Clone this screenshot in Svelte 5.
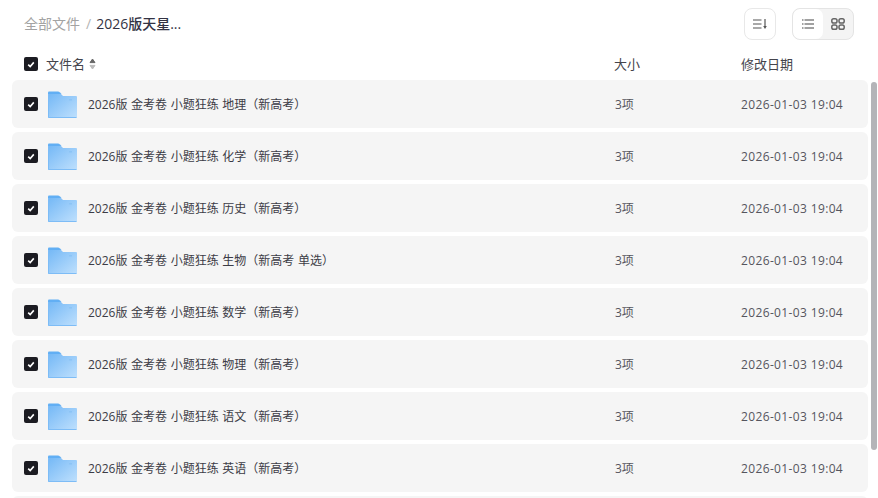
<script>
  const subjects = [
    "地理（新高考）",
    "化学（新高考）",
    "历史（新高考）",
    "生物（新高考 单选）",
    "数学（新高考）",
    "物理（新高考）",
    "语文（新高考）",
    "英语（新高考）",
  ];
</script>

{#snippet check()}
  <span class="check">
    <svg width="8" height="7" viewBox="0 0 8 7"><path d="M1.2 3.6 L3.2 5.5 L6.8 1.4" fill="none" stroke="#fff" stroke-width="1.6" /></svg>
  </span>
{/snippet}

<div class="page">
  <div class="toolbar">
    <div class="crumbs">
      <span class="root">全部文件</span>
      <span class="sep">/</span>
      <span class="current">2026版天星...</span>
    </div>
    <div class="actions">
      <button class="tool" aria-label="排序">
        <svg width="16" height="12" viewBox="0 0 16 12">
          <path d="M1 2h8.5M1 6h8.5M1 10h8.5" stroke="#555" stroke-width="1.2" fill="none" />
          <path d="M13 1v8" stroke="#555" stroke-width="1.2" />
          <path d="M11.2 8h3.6L13 11z" fill="#555" />
        </svg>
      </button>
      <div class="switch">
        <button class="seg active" aria-label="列表">
          <svg width="14" height="12" viewBox="0 0 14 12">
            <path d="M3.5 2h9.5M3.5 6h9.5M3.5 10h9.5" stroke="#444" stroke-width="1.2" fill="none" />
            <path d="M1 2h1.5M1 6h1.5M1 10h1.5" stroke="#444" stroke-width="1.2" fill="none" />
          </svg>
        </button>
        <button class="seg" aria-label="网格">
          <svg width="14" height="12" viewBox="0 0 14 12">
            <rect x="0.8" y="0.8" width="5.2" height="4.2" rx="1.8" fill="none" stroke="#666" stroke-width="1.5" />
            <rect x="8" y="0.8" width="5.2" height="4.2" rx="1.8" fill="none" stroke="#666" stroke-width="1.5" />
            <rect x="0.8" y="7" width="5.2" height="4.2" rx="1.8" fill="none" stroke="#666" stroke-width="1.5" />
            <rect x="8" y="7" width="5.2" height="4.2" rx="1.8" fill="none" stroke="#666" stroke-width="1.5" />
          </svg>
        </button>
      </div>
    </div>
  </div>

  <div class="head">
    <div class="head-name">
      {@render check()}
      <span>文件名</span>
      <svg class="sort" width="7" height="12" viewBox="0 0 7 12">
        <path d="M3.5 1 L6 4.6 H1z" fill="#666" stroke="#666" stroke-width="1" stroke-linejoin="round" />
        <path d="M3.5 11 L6 7.4 H1z" fill="#bbb" stroke="#bbb" stroke-width="1" stroke-linejoin="round" />
      </svg>
    </div>
    <div class="col-size">大小</div>
    <div class="col-date">修改日期</div>
  </div>

  <div class="list">
    {#each subjects as subject}
      <div class="row">
        <div class="name">
          {@render check()}
          <svg class="folder" width="29" height="27" viewBox="0 0 29 27">
            <defs>
              <linearGradient id="fg" x1="0" y1="0" x2="1" y2="1">
                <stop offset="0" stop-color="#74b8f6" />
                <stop offset="1" stop-color="#bfe0fd" />
              </linearGradient>
            </defs>
            <path d="M0 1.5 Q0 0.5 1 0.5 H10 Q11 0.5 12 1.5 L13.5 3 H0z" fill="#62aff4" />
            <path d="M0 3 H13 L15 5 H28 Q29 5 29 6 V26 Q29 27 28 27 H1 Q0 27 0 26z" fill="url(#fg)" />
            <path d="M0.5 3 V26.5 H28.5" fill="none" stroke="#7dbcf6" stroke-width="1" />
            <rect x="21" y="8" width="3" height="1.5" fill="#8cc4f6" />
          </svg>
          <span class="title">2026版 金考卷 小题狂练 {subject}</span>
        </div>
        <div class="col-size">3项</div>
        <div class="col-date">2026-01-03 19:04</div>
      </div>
    {/each}
    <div class="row"></div>
  </div>

  <div class="thumb"></div>
</div>

<style>
  :global(body) {
    margin: 0;
    background: #fff;
    overflow: hidden;
  }

  .page {
    position: relative;
    width: 878px;
    height: 498px;
    overflow: hidden;
    font-family: "Open Sans", "Noto Sans CJK SC", sans-serif;
    color: #333;
  }

  .toolbar {
    display: flex;
    justify-content: space-between;
    align-items: center;
    height: 48px;
    padding: 0 24px;
  }

  .crumbs {
    display: flex;
    align-items: center;
    font-size: 14px;
    margin-top: -2px;
  }

  .root {
    color: #a3a3a3;
  }

  .sep {
    margin: 0 5px 0 6px;
    color: #b4b4b4;
  }

  .current {
    color: #333344;
    font-weight: 500;
  }

  .actions {
    display: flex;
    gap: 16px;
  }

  button {
    display: flex;
    align-items: center;
    justify-content: center;
    padding: 0;
    border: none;
    background: none;
  }

  .tool {
    width: 32px;
    height: 32px;
    box-sizing: border-box;
    border: 1px solid #e8e8e8;
    border-radius: 8px;
    background: #fff;
  }

  .switch {
    display: flex;
    width: 62px;
    height: 32px;
    box-sizing: border-box;
    border: 1px solid #e4e4e4;
    border-radius: 8px;
    background: #f4f4f4;
    overflow: hidden;
  }

  .seg {
    flex: 1;
  }

  .seg.active {
    background: #fff;
    border-radius: 7px;
  }

  .head {
    display: flex;
    align-items: center;
    height: 32px;
    padding: 0 12px;
    font-size: 13px;
    color: #44444c;
  }

  .head > .col-size,
  .head > .col-date {
    position: relative;
    left: 2px;
    top: -1px;
  }

  .head-name {
    flex: 1;
    display: flex;
    align-items: center;
    gap: 8px;
    padding-left: 12px;
  }

  .head-name span:not(.check) {
    margin-top: -2px;
  }

  .sort {
    margin-left: -4px;
  }

  .check {
    display: flex;
    align-items: center;
    justify-content: center;
    width: 14px;
    height: 14px;
    border-radius: 2px;
    background: #1c1c22;
  }

  .col-size {
    width: 127px;
  }

  .col-date {
    width: 127px;
    letter-spacing: 0.36px;
  }

  .head .col-date {
    letter-spacing: 0;
  }

  .list {
    display: flex;
    flex-direction: column;
    gap: 4px;
    padding: 0 10px 0 12px;
  }

  .row {
    display: flex;
    align-items: center;
    flex: none;
    height: 48px;
    border-radius: 6px;
    background: #f5f5f5;
    font-size: 12px;
    color: #55555e;
  }

  .row .col-size {
    padding-left: 1px;
    width: 126px;
  }

  .name {
    flex: 1;
    display: flex;
    align-items: center;
    padding-left: 12px;
  }

  .folder {
    margin-left: 9.5px;
    margin-right: 11.5px;
  }

  .title {
    color: #3c3c46;
    word-spacing: 0.5px;
  }

  .thumb {
    position: absolute;
    right: 1px;
    top: 82px;
    width: 6px;
    height: 368px;
    border-radius: 3px;
    background: #b4b4b8;
  }
</style>
